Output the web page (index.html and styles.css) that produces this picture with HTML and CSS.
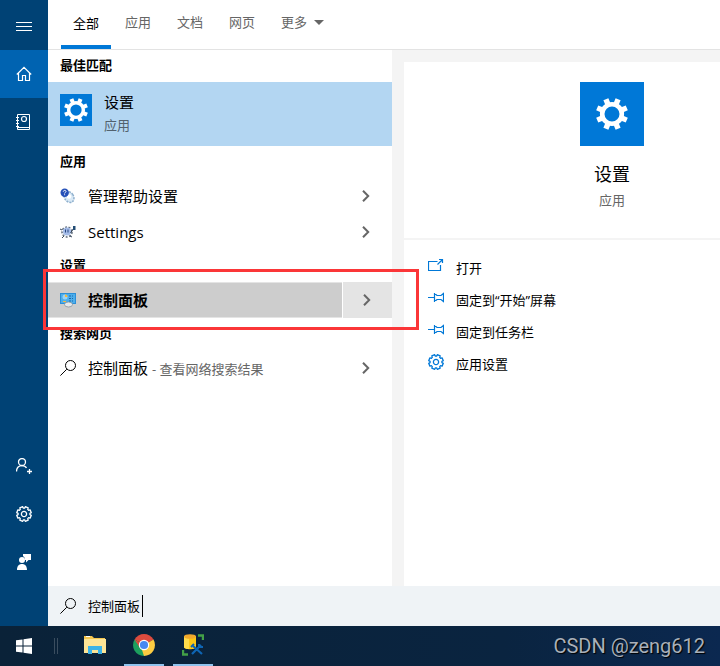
FILE: index.html
```html
<!DOCTYPE html>
<html lang="zh-CN">
<head>
    <meta charset="UTF-8">
    <meta name="viewport" content="width=device-width, initial-scale=1.0">
    <title>搜索</title>
    <link rel="stylesheet" href="styles.css">
</head>
<body>

    <!-- Shared icons -->
    <svg class="defs" width="0" height="0">
        <symbol id="gear" viewBox="-8 -8 16 16">
            <path d="M7.3 1.3 6.1 4.2 4.6 3.7 3.7 4.6 4.2 6.1 1.3 7.3 .6 5.9-.6 5.9-1.3 7.3-4.2 6.1-3.7 4.6-4.6 3.7-6.1 4.2-7.3 1.3-5.9 .6-5.9-.6-7.3-1.3-6.1-4.2-4.6-3.7-3.7-4.6-4.2-6.1-1.3-7.3-.6-5.9 .6-5.9 1.3-7.3 4.2-6.1 3.7-4.6 4.6-3.7 6.1-4.2 7.3-1.3 5.9-.6 5.9 .6Z" fill="none" stroke="currentColor" stroke-width="1.3" stroke-linejoin="round"/>
            <circle r="2.6" fill="none" stroke="currentColor" stroke-width="1.3"/>
        </symbol>
        <symbol id="gear-solid" viewBox="-16 -16 32 32">
            <circle r="9.8" fill="none" stroke="#fff" stroke-width="4.6"/>
            <g stroke="#fff" stroke-width="5.4">
                <path d="M0-10.5V-16M0 10.5V16" transform="rotate(22.5)"/>
                <path d="M0-10.5V-16M0 10.5V16" transform="rotate(67.5)"/>
                <path d="M0-10.5V-16M0 10.5V16" transform="rotate(112.5)"/>
                <path d="M0-10.5V-16M0 10.5V16" transform="rotate(157.5)"/>
            </g>
        </symbol>
        <symbol id="chevron" viewBox="0 0 8 12">
            <path d="M1 .8 6.2 6 1 11.2" fill="none" stroke="#666" stroke-width="2"/>
        </symbol>
        <symbol id="search" viewBox="0 0 16 16">
            <circle cx="10.5" cy="5.5" r="5" fill="none" stroke="currentColor"/>
            <path d="M6.8 9.2.4 15.6" stroke="currentColor"/>
        </symbol>
        <symbol id="pin" viewBox="0 0 16 12">
            <path d="M0 5.5H6M6.5 1V10M6.5 2.5H8L9 3.5H13L15.5 1.5V9.5L13 7.5H9L8 8.5H6.5" fill="none" stroke="currentColor" stroke-width="1.2"/>
        </symbol>
    </svg>

    <div class="search-window">
        <nav class="sidebar">
            <button class="side-btn menu" aria-label="菜单">
                <svg width="16" height="10" viewBox="0 0 16 10"><path d="M0 .5H16M0 4.5H16M0 8.5H16" stroke="#fff"/></svg>
            </button>
            <button class="side-btn active" aria-label="主页">
                <svg width="16" height="16" viewBox="0 0 16 16"><path d="M.8 8.5 8 1.3 15.2 8.5M2.5 7V14.5H6.5V9.5H9.5V14.5H13.5V7" fill="none" stroke="#fff" stroke-width="1.2"/></svg>
            </button>
            <button class="side-btn" aria-label="笔记本">
                <svg width="16" height="16" viewBox="0 0 16 16"><path d="M1.5.5H13.5V15.5H1.5ZM2 13.5H13.5M0 3.5H3M0 6.5H3M0 9.5H3M0 12.5H3" fill="none" stroke="#fff"/><circle cx="8" cy="5" r="2.5" fill="none" stroke="#fff" stroke-width="1.2"/></svg>
            </button>
            <button class="side-btn account" aria-label="帐户">
                <svg width="16" height="16" viewBox="0 0 16 16"><circle cx="6" cy="4" r="3.5" fill="none" stroke="#fff" stroke-width="1.3"/><path d="M.5 13.5C.5 9.5 3 7.6 6 7.6 8 7.6 9.7 8.5 10.5 10M13.5 11V16M11 13.5H16" fill="none" stroke="#fff" stroke-width="1.3"/></svg>
            </button>
            <button class="side-btn" aria-label="设置">
                <svg width="16" height="16"><use href="#gear"/></svg>
            </button>
            <button class="side-btn" aria-label="反馈">
                <svg width="16" height="16" viewBox="0 0 16 16"><path d="M7 0H15V6H12.5L10 8.5V6H9Q9 3 7 2ZM1 16C1 12 3 10 6 10S11 12 11 16Z" fill="#fff"/><circle cx="6" cy="6" r="3" fill="#fff"/></svg>
            </button>
        </nav>

        <main class="content">
            <div class="tabs">
                <button class="tab selected">全部</button>
                <button class="tab">应用</button>
                <button class="tab">文档</button>
                <button class="tab">网页</button>
                <button class="tab">更多<span class="arrow"></span></button>
            </div>

            <div class="panes">
                <section class="results">
                    <h2>最佳匹配</h2>
                    <button class="best">
                        <span class="tile"><svg width="24" height="24"><use href="#gear-solid"/></svg></span>
                        <span class="best-text">
                            <span class="name">设置</span>
                            <span class="kind">应用</span>
                        </span>
                    </button>

                    <h2>应用</h2>
                    <div class="row">
                        <button class="item">
                            <svg width="16" height="16" viewBox="0 0 16 16">
                                <ellipse cx="9" cy="9" rx="4.5" ry="5.8" transform="rotate(-35 9 9)" fill="#d9e9f6" stroke="#8fb0cd" stroke-width="1.5" stroke-dasharray="2 1"/>
                                <circle cx="9" cy="8.5" r="2.3" fill="#fff"/>
                                <circle cx="4.7" cy="4.7" r="4.2" fill="#2450b8"/>
                                <path d="M3.3 3.7C3.3 2 6 2 6 3.5 6 4.5 4.6 4.4 4.6 5.5M4.6 6.3V7.2" fill="none" stroke="#fff"/>
                            </svg>
                            管理帮助设置
                        </button>
                        <button class="more" aria-label="展开"><svg width="8" height="12"><use href="#chevron"/></svg></button>
                    </div>
                    <div class="row">
                        <button class="item">
                            <svg width="16" height="16" viewBox="0 0 16 16">
                                <circle cx="7" cy="8" r="5" fill="none" stroke="#65717f" stroke-width="1.6" stroke-dasharray="2 1.5"/>
                                <circle cx="7" cy="7.5" r="4" fill="#a3bbe8"/>
                                <path d="M5.5 5.5V8.5M8 5.5V8.5" stroke="#26457f"/>
                                <path d="M0 5 2 6M10.5 9 14.5 3M4 12 2 14M10 12 12 13" stroke="#39495c"/>
                                <path d="M13 2H15.500V6H13Z" fill="#234d75"/>
                            </svg>
                            Settings
                        </button>
                        <button class="more" aria-label="展开"><svg width="8" height="12"><use href="#chevron"/></svg></button>
                    </div>

                    <h2>设置</h2>
                    <div class="row highlighted">
                        <button class="item">
                            <svg width="16" height="16" viewBox="0 0 16 16">
                                <path d="M0 1H16V12H0Z" fill="#2b8fd8"/>
                                <path d="M1 2H15V11H1Z" fill="#4eaeea"/>
                                <circle cx="5" cy="5" r="2.5" fill="#9bd3f5"/>
                                <path d="M5 2.500V5H7.500A2.500 2.500 0 0 0 5 2.500Z" fill="#f5b83d"/>
                                <path d="M3 9.500H6" stroke="#f5b83d"/>
                                <path d="M9 4H13M9 6.500H13M9 9H13" stroke="#1b69ad" stroke-dasharray="2 1"/>
                                <ellipse cx="8.500" cy="12.500" rx="4" ry="2.500" fill="#e4e8eb" stroke="#7d8b97" stroke-width=".7"/>
                            </svg>
                            控制面板
                        </button>
                        <button class="more" aria-label="展开"><svg width="8" height="12"><use href="#chevron"/></svg></button>
                        <div class="marker"></div>
                    </div>

                    <h2>搜索网页</h2>
                    <div class="row">
                        <button class="item">
                            <svg width="16" height="16"><use href="#search"/></svg>
                            <span>控制面板 <small>- 查看网络搜索结果</small></span>
                        </button>
                        <button class="more" aria-label="展开"><svg width="8" height="12"><use href="#chevron"/></svg></button>
                    </div>
                </section>

                <section class="preview">
                    <div class="hero">
                        <span class="tile large"><svg width="32" height="32"><use href="#gear-solid"/></svg></span>
                        <span class="hero-name">设置</span>
                        <span class="hero-kind">应用</span>
                    </div>
                    <div class="actions">
                        <button class="action">
                            <svg width="16" height="16" viewBox="0 0 16 16"><path d="M9.500 3.500H.5V12.500H12.500V7M9.500 6.500 14.500 1.500M11 1.500H14.500V5" fill="none" stroke="currentColor" stroke-width="1.2"/></svg>
                            打开
                        </button>
                        <button class="action">
                            <svg width="16" height="16"><use href="#pin"/></svg>
                            固定到“开始”屏幕
                        </button>
                        <button class="action">
                            <svg width="16" height="16"><use href="#pin"/></svg>
                            固定到任务栏
                        </button>
                        <button class="action">
                            <svg width="16" height="16"><use href="#gear"/></svg>
                            应用设置
                        </button>
                    </div>
                </section>
            </div>

            <label class="search-box">
                <svg width="16" height="16"><use href="#search"/></svg>
                <input type="text" value="控制面板" aria-label="搜索">
                <span class="caret"></span>
            </label>
        </main>
    </div>

    <footer class="taskbar">
        <button class="start" aria-label="开始">
            <svg width="16" height="16" viewBox="0 0 16 16"><path d="M0 2.300 6.500 1.400V7.500H0ZM7.500 1.200 16 0V7.500H7.500ZM0 8.500H6.500V14.600L0 13.700ZM7.500 8.500H16V16L7.500 14.800Z" fill="#fff"/></svg>
        </button>
        <span class="grip"></span>
        <button class="app" aria-label="文件资源管理器">
            <svg width="22" height="20" viewBox="0 0 22 20">
                <path d="M0 1H8L10 3H21V18H0Z" fill="#f4c64f"/>
                <path d="M0 4H22V18H0Z" fill="#fde596"/>
                <path d="M2 1.500H6" stroke="#fff"/>
                <path d="M4 19V11H18V19H14V15H8V19Z" fill="#3bb3e8"/>
            </svg>
        </button>
        <button class="app running" aria-label="Chrome">
            <svg width="22" height="22" viewBox="-11 -11 22 22">
                <path d="M0 0-9.500-5.500A11 11 0 0 1 9.500-5.500Z" fill="#dd4b3e"/>
                <path d="M0 0 9.500-5.500A11 11 0 0 1 0 11Z" fill="#fccc42"/>
                <path d="M0 0V11A11 11 0 0 1-9.500-5.500Z" fill="#1da05e"/>
                <path d="M0-5H9.800L9.500-5.500H0ZM-9.500-5.500-4.300 2.500 0 0Z" fill="#dd4b3e"/>
                <path d="M4.300 2.500 0 11-2 5Z" fill="#fccc42"/>
                <circle r="5.200" fill="#fff"/>
                <circle r="4.100" fill="#4688f1"/>
            </svg>
        </button>
        <button class="app running" aria-label="数据库工具">
            <svg width="22" height="22" viewBox="0 0 22 22">
                <path d="M2 2V13C2 16 14 16 14 13V2Z" fill="#fdc816"/>
                <path d="M2 2V13C2 14.500 5 15 7 15V3Z" fill="#ffdc4b"/>
                <ellipse cx="8" cy="2.500" rx="6" ry="2.300" fill="#f2a92c"/>
                <path d="M16 1.500H21V6M1 16V20.500H6" fill="none" stroke="#43a047" stroke-width="2.400"/>
                <path d="M10 20 19 11M11 12 20 20" stroke="#0e65b4" stroke-width="2.200"/>
                <path d="M9 13 12 10M17 10V13H21" fill="none" stroke="#0e65b4" stroke-width="2"/>
            </svg>
        </button>
        <span class="watermark">CSDN @zeng612</span>
    </footer>

</body>
</html>
```

FILE: styles.css
```css
* {
    box-sizing: border-box;
}
body {
    display: flex;
    flex-direction: column;
    min-height: 100vh;
    margin: 0;
    background: #fff;
    color: #000;
    font-family: "Open Sans", "Noto Sans CJK SC", sans-serif;
    font-size: 13px;
    line-height: 20px;
}
button, input {
    margin: 0;
    padding: 0;
    border: none;
    background: none;
    color: inherit;
    font: inherit;
    text-align: left;
}
svg {
    display: block;
    flex: none;
}
.defs {
    position: absolute;
}
.search-window {
    display: flex;
    flex: 1;
}

/* Left rail */
.sidebar {
    display: flex;
    flex-direction: column;
    flex: none;
    width: 48px;
    padding-bottom: 40px;
    background: #004275;
}
.side-btn {
    display: flex;
    align-items: center;
    justify-content: center;
    height: 48px;
    color: #fff;
}
.side-btn.menu {
    height: 50px;
    padding-top: 4px;
}
.side-btn.active {
    background: #0063b1;
}
.side-btn.account {
    margin-top: auto;
}

.content {
    display: flex;
    flex-direction: column;
    flex: 1;
    min-width: 0;
}

/* Tabs */
.tabs {
    display: flex;
    gap: 2px;
    height: 50px;
    padding-left: 13px;
    border-bottom: 1px solid #e3e3e3;
}
.tab {
    display: flex;
    align-items: center;
    height: 49px;
    padding: 0 12px 6px;
    color: #666;
}
.tab.selected {
    padding-bottom: 0;
    border-bottom: 4px solid #0078d7;
    color: #000;
}
.arrow {
    margin-left: 7px;
    margin-top: 2px;
    border: 5px solid transparent;
    border-top-color: #666;
    border-bottom: none;
}

.panes {
    display: flex;
    flex: 1;
    background: #f4f4f4;
}

/* Result list */
.results {
    flex: none;
    width: 344px;
    background: #fff;
}
.results h2 {
    margin: 0;
    padding: 5px 12px 7px;
    font-size: 13px;
    font-weight: 700;
    line-height: 20px;
}
.best {
    display: flex;
    gap: 12px;
    width: 100%;
    height: 64px;
    padding: 10px 12px;
    background: #b3d6f2;
}
.tile {
    display: flex;
    align-items: center;
    justify-content: center;
    flex: none;
    width: 32px;
    height: 32px;
    background: #0078d7;
}
.best .tile {
    margin-top: 2px;
}
.tile.large {
    width: 64px;
    height: 64px;
}
.best-text {
    display: flex;
    flex-direction: column;
    gap: 3px;
}
.name {
    font-size: 15px;
}
.kind {
    color: #52616e;
}
.row {
    display: flex;
    position: relative;
    height: 36px;
}
.item {
    display: flex;
    align-items: center;
    flex: 1;
    gap: 12px;
    padding-left: 12px;
    font-size: 15px;
}
.item small {
    color: #666;
    font-size: 13px;
}
.more {
    display: flex;
    align-items: center;
    justify-content: center;
    width: 50px;
    padding-right: 2px;
}
.highlighted .item {
    border: solid #e4e4e4;
    border-width: 1px 0;
    background: #cdcdcd;
    font-weight: 700;
}
.highlighted .more {
    border-left: 1px solid #fff;
    background: #e4e4e4;
}
/* Red frame around the highlighted result */
.marker {
    position: absolute;
    z-index: 1;
    top: -13px;
    right: -27px;
    bottom: -12px;
    left: -5px;
    border: 3px solid #fb3638;
    pointer-events: none;
}

/* Preview pane */
.preview {
    flex: 1;
    min-width: 0;
    margin: 12px 0 0 12px;
    background: #fff;
}
.hero {
    display: flex;
    flex-direction: column;
    align-items: center;
    padding: 20px 0 28px 100px;
    border-bottom: 2px solid #f4f4f4;
}
.hero-name {
    margin-top: 16px;
    font-size: 18px;
    line-height: 24px;
}
.hero-kind {
    margin-top: 4px;
    color: #666;
}
.actions {
    display: flex;
    flex-direction: column;
    padding: 12px 24px;
}
.action {
    display: flex;
    align-items: center;
    gap: 12px;
    height: 32px;
}
.action svg {
    margin-bottom: 4px;
    color: #0078d7;
}

/* Search box */
.search-box {
    display: flex;
    align-items: center;
    height: 40px;
    padding-left: 12px;
    background: #eff3f6;
}
.search-box input {
    width: 54px;
    margin-left: 12px;
    outline: none;
}
.caret {
    width: 1px;
    height: 22px;
    background: #000;
}

/* Taskbar */
.taskbar {
    display: flex;
    gap: 9px;
    height: 40px;
    padding-right: 15px;
    background: linear-gradient(90deg, #0a2238, #0a2440 70%, #0b2850);
}
.start {
    display: flex;
    align-items: center;
    justify-content: center;
    width: 48px;
    margin-right: -3px;
}
.grip {
    align-self: center;
    width: 4px;
    height: 16px;
    margin-right: 8px;
    border: solid #3a4d5f;
    border-width: 0 1px;
}
.app {
    display: flex;
    align-items: center;
    justify-content: center;
    width: 40px;
    border-bottom: 2px solid transparent;
}
.app.running {
    border-bottom-color: #8fc3ee;
}
.watermark {
    align-self: center;
    margin-left: auto;
    color: #a9b0b9;
    font-family: Roboto, sans-serif;
    font-size: 20px;
    text-shadow: 1px 1px 1px #000;
}
```
